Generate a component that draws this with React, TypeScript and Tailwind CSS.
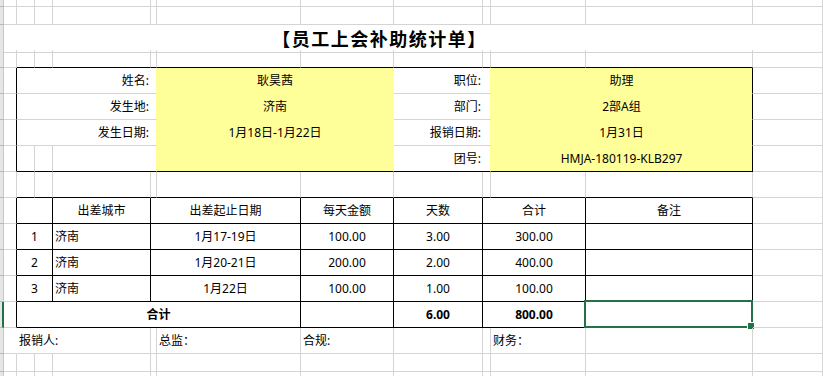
import React from "react";

type CellDef = {
  span?: string;
  text?: string;
  cls?: string;
  r?: string;
  b?: string;
  bg?: string;
  sel?: boolean;
};

type RowDef = { h: string; sel?: boolean; cells: CellDef[] };

const GRID =
  "grid grid-cols-[4px_13px_18px_18px_98px_6px_144px_93px_89px_8px_95px_167px_1fr]";

// border colours
const K = "border-r-black";
const KB = "border-b-black";
const Y = "border-r-[#ffff99]";
const YB = "border-b-[#ffff99]";
const W = "border-r-white";
const YEL = "bg-[#ffff99]";
const C = "justify-center";
const L = "pl-[2px]";

const plain = (): CellDef[] => Array.from({ length: 12 }, () => ({}));

// row whose bottom edge is the top line of a framed block (B..K)
const topOfBox = (): CellDef[] => [
  {},
  ...Array.from({ length: 10 }, () => ({ b: KB })),
  {},
];

const info = (labelL: string, valL: string, labelR: string, valR: string): CellDef[] => [
  { r: K },
  { span: "col-span-4", text: labelL, cls: "justify-end pr-[7px]", r: Y },
  { span: "col-span-2", text: valL, bg: YEL, cls: C, r: Y, b: YB },
  { span: "col-span-2", text: labelR, cls: "justify-end pr-[9px]", r: Y },
  { span: "col-span-2", text: valR, bg: YEL, cls: C, r: K, b: YB },
  {},
];

const line = (
  no: string,
  city: string,
  dates: string,
  perDay: string,
  days: string,
  total: string,
  header = false
): CellDef[] => [
  { r: K },
  { span: "col-span-2", text: no, cls: C, r: K, b: KB },
  { text: city, cls: header ? C : L, r: K, b: KB },
  { span: "col-span-2", text: dates, cls: C, r: K, b: KB },
  { text: perDay, cls: C, r: K, b: KB },
  { text: days, cls: C, r: K, b: KB },
  { span: "col-span-2", text: total, cls: C, r: K, b: KB },
  { text: header ? "备注" : "", cls: C, r: K, b: KB },
  {},
];

const rows: RowDef[] = [
  { h: "h-[7px]", cells: plain() },
  { h: "h-[18px]", cells: plain() },
  {
    h: "h-[25px]",
    cells: [
      {
        span: "col-span-11",
        text: "【员工上会补助统计单】",
        cls: "justify-center pl-[3px] text-[18px] font-bold tracking-[1.5px] font-['Noto_Sans_CJK_SC',sans-serif]",
        r: W,
      },
      {},
    ],
  },
  { h: "h-[18px]", cells: topOfBox() },
  { h: "h-[26px]", cells: info("姓名:", "耿昊茜", "职位:", "助理") },
  { h: "h-[26px]", cells: info("发生地:", "济南", "部门:", "2部A组") },
  { h: "h-[26px]", cells: info("发生日期:", "1月18日-1月22日", "报销日期:", "1月31日") },
  {
    h: "h-[26px]",
    cells: [
      { r: K },
      { b: KB },
      { b: KB },
      { span: "col-span-2", r: Y, b: KB },
      { span: "col-span-2", bg: YEL, r: Y, b: KB },
      { span: "col-span-2", text: "团号:", cls: "justify-end pr-[9px]", r: Y, b: KB },
      { span: "col-span-2", text: "HMJA-180119-KLB297", bg: YEL, cls: C, r: K, b: KB },
      {},
    ],
  },
  { h: "h-[26px]", cells: topOfBox() },
  { h: "h-[26px]", cells: line("", "出差城市", "出差起止日期", "每天金额", "天数", "合计", true) },
  { h: "h-[26px]", cells: line("1", "济南", "1月17-19日", "100.00", "3.00", "300.00") },
  { h: "h-[26px]", cells: line("2", "济南", "1月20-21日", "200.00", "2.00", "400.00") },
  { h: "h-[26px]", cells: line("3", "济南", "1月22日", "100.00", "1.00", "100.00") },
  {
    h: "h-[26px]",
    sel: true,
    cells: [
      { r: K },
      { span: "col-span-5", text: "合计", cls: "justify-center font-bold", r: K, b: KB },
      { r: K, b: KB },
      { text: "6.00", cls: "justify-center font-bold", r: K, b: KB },
      { span: "col-span-2", text: "800.00", cls: "justify-center font-bold", r: K, b: KB },
      { r: K, b: KB, sel: true },
      {},
    ],
  },
  {
    h: "h-[26px]",
    cells: [
      { r: W },
      { span: "col-span-3", text: "报销人:", cls: L },
      {},
      { text: "总监：", cls: L },
      { text: "合规:", cls: L },
      {},
      {},
      { text: "财务：", cls: L },
      {},
      {},
    ],
  },
  { h: "h-[18px]", cells: plain() },
  { h: "h-[18px]", cells: plain() },
];

function Cell({ c }: { c: CellDef }) {
  return (
    <div
      className={`relative flex items-center whitespace-nowrap border-r border-b ${c.span ?? ""} ${
        c.r ?? "border-r-[#d4d4d4]"
      } ${c.b ?? "border-b-[#d4d4d4]"} ${c.bg ?? ""} ${c.cls ?? ""}`}
    >
      {c.text}
      {c.sel && (
        <>
          <div className="absolute -left-[2px] -top-[2px] -right-[1px] -bottom-[1px] border-2 border-[#217346]" />
          <div className="absolute -right-[2px] -bottom-[2px] w-[7px] h-[7px] bg-[#217346] border-l border-t border-white" />
        </>
      )}
    </div>
  );
}

export default function App() {
  return (
    <div className="w-full h-[376px] overflow-hidden bg-white text-black text-[12px] font-['Noto_Sans','Noto_Sans_CJK_SC',sans-serif]">
      {rows.map((row, i) => (
        <div key={i} className={`${GRID} ${row.h}`}>
          {/* row header strip */}
          <div
            className={`bg-[#e6e6e6] border-b border-b-[#b8b8b8] ${
              row.sel ? "border-r-2 border-r-[#217346]" : "border-r border-r-[#c6c6c6]"
            }`}
          />
          {row.cells.map((c, j) => (
            <Cell key={j} c={c} />
          ))}
        </div>
      ))}
    </div>
  );
}
